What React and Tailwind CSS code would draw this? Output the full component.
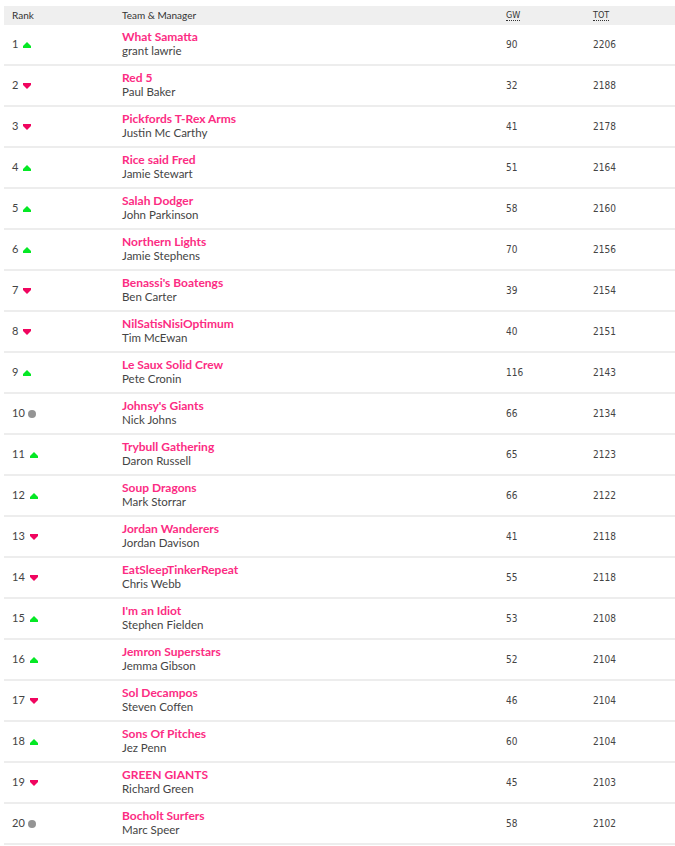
const rows = [
  { rank: 1, move: 'up', team: 'What Samatta', manager: 'grant lawrie', gw: 90, tot: 2206 },
  { rank: 2, move: 'down', team: 'Red 5', manager: 'Paul Baker', gw: 32, tot: 2188 },
  { rank: 3, move: 'down', team: 'Pickfords T-Rex Arms', manager: 'Justin Mc Carthy', gw: 41, tot: 2178 },
  { rank: 4, move: 'up', team: 'Rice said Fred', manager: 'Jamie Stewart', gw: 51, tot: 2164 },
  { rank: 5, move: 'up', team: 'Salah Dodger', manager: 'John Parkinson', gw: 58, tot: 2160 },
  { rank: 6, move: 'up', team: 'Northern Lights', manager: 'Jamie Stephens', gw: 70, tot: 2156 },
  { rank: 7, move: 'down', team: "Benassi's Boatengs", manager: 'Ben Carter', gw: 39, tot: 2154 },
  { rank: 8, move: 'down', team: 'NilSatisNisiOptimum', manager: 'Tim McEwan', gw: 40, tot: 2151 },
  { rank: 9, move: 'up', team: 'Le Saux Solid Crew', manager: 'Pete Cronin', gw: 116, tot: 2143 },
  { rank: 10, move: 'same', team: "Johnsy's Giants", manager: 'Nick Johns', gw: 66, tot: 2134 },
  { rank: 11, move: 'up', team: 'Trybull Gathering', manager: 'Daron Russell', gw: 65, tot: 2123 },
  { rank: 12, move: 'up', team: 'Soup Dragons', manager: 'Mark Storrar', gw: 66, tot: 2122 },
  { rank: 13, move: 'down', team: 'Jordan Wanderers', manager: 'Jordan Davison', gw: 41, tot: 2118 },
  { rank: 14, move: 'down', team: 'EatSleepTinkerRepeat', manager: 'Chris Webb', gw: 55, tot: 2118 },
  { rank: 15, move: 'up', team: "I'm an Idiot", manager: 'Stephen Fielden', gw: 53, tot: 2108 },
  { rank: 16, move: 'up', team: 'Jemron Superstars', manager: 'Jemma Gibson', gw: 52, tot: 2104 },
  { rank: 17, move: 'down', team: 'Sol Decampos', manager: 'Steven Coffen', gw: 46, tot: 2104 },
  { rank: 18, move: 'up', team: 'Sons Of Pitches', manager: 'Jez Penn', gw: 60, tot: 2104 },
  { rank: 19, move: 'down', team: 'GREEN GIANTS', manager: 'Richard Green', gw: 45, tot: 2103 },
  { rank: 20, move: 'same', team: 'Bocholt Surfers', manager: 'Marc Speer', gw: 58, tot: 2102 },
];

function Movement({ move }) {
  if (move === 'up') {
    return (
      <svg width="10" height="6" viewBox="0 0 10 6" className="ml-[4px]">
        <polygon points="5,0 9,4 9,6 1,6 1,4" fill="#05e825" />
      </svg>
    );
  }
  if (move === 'down') {
    return (
      <svg width="10" height="6" viewBox="0 0 10 6" className="ml-[4px]">
        <polygon points="1,0 9,0 9,2 5,6 1,2" fill="#f0055f" />
      </svg>
    );
  }
  return <span className="ml-[3px] inline-block h-[8px] w-[8px] rounded-full bg-[#949494]" />;
}

function App() {
  return (
    <main className="min-h-screen bg-white pl-[4px] pt-[6px] font-['Lato','Noto_Sans',sans-serif] text-[#333]">
      <div className="flex h-[19px] items-center bg-[#efefef] text-[10px] text-[#333]">
        <div className="w-[118px] pl-[8px]">Rank</div>
        <div className="w-[384px]">Team &amp; Manager</div>
        <div className="w-[87px] font-['DejaVu_Sans_Condensed',sans-serif] text-[9px]">
          <span className="border-b border-dotted border-[#333]">GW</span>
        </div>
        <div className="font-['DejaVu_Sans_Condensed',sans-serif] text-[9px]">
          <span className="border-b border-dotted border-[#333]">TOT</span>
        </div>
      </div>

      {rows.map((row) => (
        <div key={row.rank} className="flex h-[41px] items-center border-b-2 border-[#ededed]">
          <div className="flex w-[118px] items-center pl-[8px] text-[11px] text-[#444]">
            <span>{row.rank}</span>
            <Movement move={row.move} />
          </div>
          <div className="w-[384px] pb-[1px]">
            <div className="text-[12px] leading-[14.5px] font-bold text-[#fc2c83]">{row.team}</div>
            <div className="text-[11.5px] leading-[14px] text-[#444]">{row.manager}</div>
          </div>
          <div className="w-[87px] font-['DejaVu_Sans_Condensed',sans-serif] text-[10px] text-[#444]">{row.gw}</div>
          <div className="font-['DejaVu_Sans_Condensed',sans-serif] text-[10px] text-[#444]">{row.tot}</div>
        </div>
      ))}
    </main>
  );
}

export default App;
